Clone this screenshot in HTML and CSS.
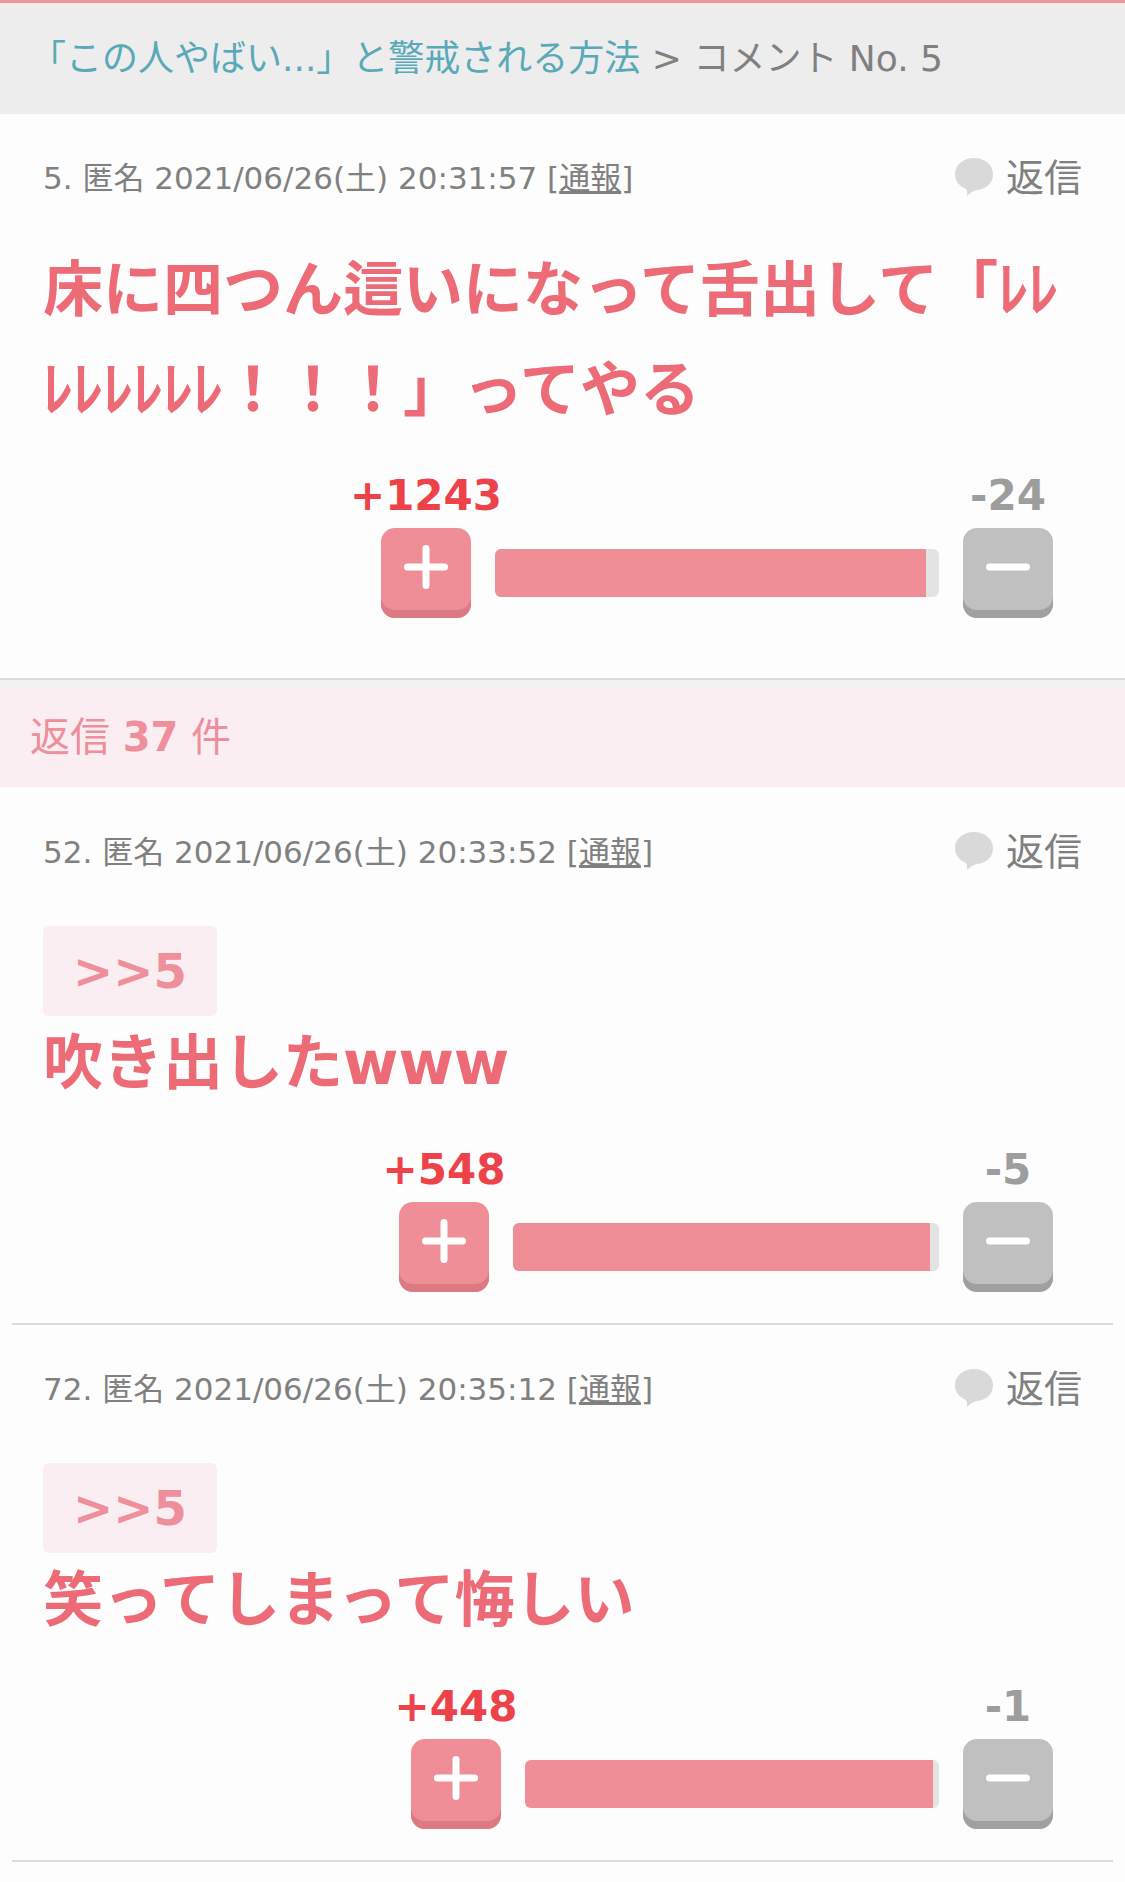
FILE: index.html
```html
<!DOCTYPE html>
<html lang="ja">
<head>
    <meta charset="UTF-8">
    <meta name="viewport" content="width=device-width, initial-scale=1.0">
    <title>コメント No. 5</title>
    <link rel="stylesheet" href="styles.css">
</head>
<body>
    <nav class="breadcrumb">
        <a href="#">「この人やばい...」と警戒される方法</a> &gt; コメント No. 5
    </nav>
    <main>
        <article class="comment comment-main">
            <header class="comment-head">
                <p class="meta">5. 匿名 2021/06/26(土) 20:31:57 [<a href="#">通報</a>]</p>
                <a class="reply" href="#">
                    <svg class="bubble" viewBox="0 0 40 40"><path d="M20 0C9 0 1 7 1 16C1 23 5 28 12 31Q14 34 13 38Q18 33 23 32C33 31 39 25 39 16C39 7 31 0 20 0Z"/></svg>
                    返信
                </a>
            </header>
            <p class="body">床に四つん這いになって舌出して「ﾚﾚﾚﾚﾚﾚﾚﾚ！！！」ってやる</p>
            <div class="votes">
                <div class="vote">
                    <span class="count plus">+1243</span>
                    <button class="btn btn-plus" type="button" aria-label="プラス">
                        <svg viewBox="0 0 44 44"><path d="M22 3.500V40.500M3.500 22H40.500"/></svg>
                    </button>
                </div>
                <div class="bar" style="width: 444px"><div class="fill" style="width: 97%"></div></div>
                <div class="vote">
                    <span class="count minus">-24</span>
                    <button class="btn btn-minus" type="button" aria-label="マイナス">
                        <svg viewBox="0 0 44 44"><path d="M3.500 22H40.500"/></svg>
                    </button>
                </div>
            </div>
        </article>

        <h2 class="replies-title">返信 <strong>37</strong> 件</h2>

        <section class="replies">
            <article class="comment">
                <header class="comment-head">
                    <p class="meta">52. 匿名 2021/06/26(土) 20:33:52 [<a href="#">通報</a>]</p>
                    <a class="reply" href="#">
                        <svg class="bubble" viewBox="0 0 40 40"><path d="M20 0C9 0 1 7 1 16C1 23 5 28 12 31Q14 34 13 38Q18 33 23 32C33 31 39 25 39 16C39 7 31 0 20 0Z"/></svg>
                        返信
                    </a>
                </header>
                <a class="anchor" href="#">&gt;&gt;5</a>
                <p class="body">吹き出したwww</p>
                <div class="votes">
                    <div class="vote">
                        <span class="count plus">+548</span>
                        <button class="btn btn-plus" type="button" aria-label="プラス">
                            <svg viewBox="0 0 44 44"><path d="M22 3.500V40.500M3.500 22H40.500"/></svg>
                        </button>
                    </div>
                    <div class="bar" style="width: 426px"><div class="fill" style="width: 98%"></div></div>
                    <div class="vote">
                        <span class="count minus">-5</span>
                        <button class="btn btn-minus" type="button" aria-label="マイナス">
                            <svg viewBox="0 0 44 44"><path d="M3.500 22H40.500"/></svg>
                        </button>
                    </div>
                </div>
            </article>

            <article class="comment">
                <header class="comment-head">
                    <p class="meta">72. 匿名 2021/06/26(土) 20:35:12 [<a href="#">通報</a>]</p>
                    <a class="reply" href="#">
                        <svg class="bubble" viewBox="0 0 40 40"><path d="M20 0C9 0 1 7 1 16C1 23 5 28 12 31Q14 34 13 38Q18 33 23 32C33 31 39 25 39 16C39 7 31 0 20 0Z"/></svg>
                        返信
                    </a>
                </header>
                <a class="anchor" href="#">&gt;&gt;5</a>
                <p class="body">笑ってしまって悔しい</p>
                <div class="votes">
                    <div class="vote">
                        <span class="count plus">+448</span>
                        <button class="btn btn-plus" type="button" aria-label="プラス">
                            <svg viewBox="0 0 44 44"><path d="M22 3.500V40.500M3.500 22H40.500"/></svg>
                        </button>
                    </div>
                    <div class="bar" style="width: 414px"><div class="fill" style="width: 98.5%"></div></div>
                    <div class="vote">
                        <span class="count minus">-1</span>
                        <button class="btn btn-minus" type="button" aria-label="マイナス">
                            <svg viewBox="0 0 44 44"><path d="M3.500 22H40.500"/></svg>
                        </button>
                    </div>
                </div>
            </article>
        </section>
    </main>
</body>
</html>
```
FILE: styles.css
```css
* {
    box-sizing: border-box;
}

body {
    margin: 0;
    font-family: Verdana, "DejaVu Sans", "Noto Sans CJK JP", sans-serif;
    background-color: #fdfdfd;
    color: #808080;
    text-spacing-trim: space-all;
}

p {
    margin: 0;
}

.breadcrumb {
    border-top: 3px solid #ee959c;
    padding: 26px 30px 25px;
    background-color: #ededed;
    font-size: 36px;
    line-height: 60px;
}

.breadcrumb a {
    color: #5aa9b9;
    text-decoration: none;
}

.comment {
    margin: 0 12px;
    padding: 34px 31px 31px;
    border-bottom: 2px solid #dcdcdc;
}

.comment-head {
    display: flex;
    justify-content: space-between;
    align-items: center;
    height: 60px;
    margin-bottom: 44px;
}

.meta {
    font-size: 31px;
    line-height: 60px;
}

.meta a {
    color: inherit;
}

.reply {
    display: flex;
    align-items: center;
    gap: 12px;
    font-size: 38px;
    line-height: 60px;
    color: #808080;
    text-decoration: none;
}

.bubble {
    width: 40px;
    height: 40px;
    fill: #d9d9d9;
}

.body {
    font-size: 60px;
    font-weight: bold;
    line-height: 94px;
    color: #ec6b77;
    margin-bottom: 35px;
}

.anchor {
    display: block;
    width: fit-content;
    padding: 0 30px;
    border-radius: 6px;
    background-color: #faeef2;
    color: #ee8f9b;
    font-size: 48px;
    font-weight: bold;
    line-height: 90px;
    text-decoration: none;
}

/* the opening comment spans the full width and has no quote link */
.comment-main {
    margin: 0;
    padding: 34px 43px 60px;
}

.comment-main .comment-head {
    margin-bottom: 32px;
}

.comment-main .body {
    line-height: 100px;
    margin-bottom: 31px;
}

.votes {
    display: flex;
    justify-content: flex-end;
    align-items: flex-end;
    gap: 24px;
    padding-right: 29px;
}

.vote {
    display: flex;
    flex-direction: column;
    align-items: center;
    gap: 8px;
    width: 90px;
}

.count {
    font-size: 42px;
    font-weight: bold;
    line-height: 49px;
    white-space: nowrap;
}

.plus {
    color: #ee424b;
}

.minus {
    color: #9d9d9d;
}

.btn {
    width: 90px;
    height: 90px;
    padding: 0 0 12px;
    border: none;
    border-radius: 14px;
    cursor: pointer;
}

.btn svg {
    display: block;
    width: 44px;
    height: 44px;
    margin: 0 auto;
    fill: none;
    stroke: white;
    stroke-width: 7;
    stroke-linecap: round;
}

.btn-plus {
    background-color: #f08e98;
    box-shadow: inset 0 -8px 0 #dc7a84;
}

.btn-minus {
    background-color: #c0c0c0;
    box-shadow: inset 0 -8px 0 #a0a0a0;
}

.bar {
    height: 48px;
    margin-bottom: 21px;
    border-radius: 6px;
    background-color: #e3e3e3;
    overflow: hidden;
}

.fill {
    height: 100%;
    background-color: #f08e98;
}

.replies-title {
    margin: 0;
    padding: 22px 30px 22px;
    border-top: 7px solid #f3f3f3;
    background-color: #faeef2;
    color: #ee8f9b;
    font-size: 40px;
    font-weight: normal;
    line-height: 56px;
}

.replies {
    padding-top: 1px;
}
```
